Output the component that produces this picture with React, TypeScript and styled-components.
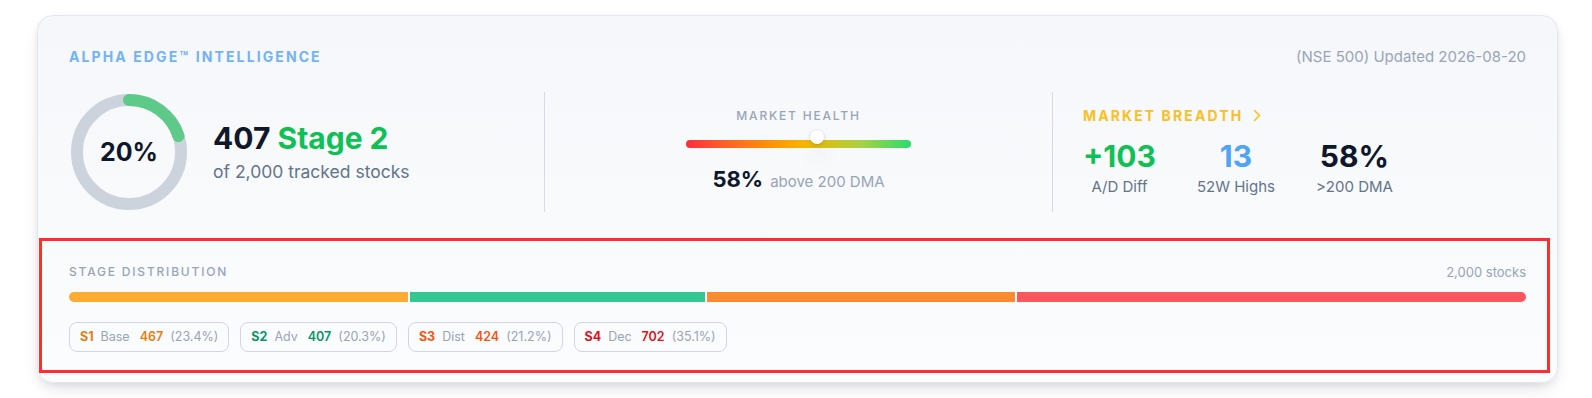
import React from "react";
import styled, { createGlobalStyle } from "styled-components";

const GlobalStyle = createGlobalStyle`
  html, body { margin: 0; padding: 0; background: #ffffff; }
  body {
    font-family: Inter, "Noto Sans", "Liberation Sans", sans-serif;
    -webkit-font-smoothing: antialiased;
    color: #0f172a;
  }
  * { box-sizing: border-box; }
`;

const Page = styled.div`
  padding: 15px 34px 15px 37px;
`;

const Card = styled.section`
  position: relative;
  border: 1px solid #e1e7ef;
  border-radius: 16px;
  background: linear-gradient(180deg, #f5f7fa 0%, #f8fafc 55%, #fbfcfe 100%);
  box-shadow: 0 8px 18px -6px rgba(15, 23, 42, 0.18), 0 2px 6px rgba(15, 23, 42, 0.05);
  padding: 31px 31px 30px;
`;

const Header = styled.div`
  display: flex;
  justify-content: space-between;
  align-items: center;
  height: 20px;
  margin-bottom: 25px;
`;

const Eyebrow = styled.div<{ $color: string }>`
  font-size: 14px;
  line-height: 20px;
  font-weight: 700;
  letter-spacing: 0.15em;
  text-transform: uppercase;
  color: ${(p) => p.$color};
`;

const Updated = styled.div`
  font-size: 15px;
  line-height: 20px;
  color: #9aa5b8;
`;

const Row = styled.div`
  display: flex;
  height: 120px;
`;

const Column = styled.div`
  flex: 1 1 0;
  min-width: 0;
  box-sizing: content-box;
`;

const LeftCol = styled(Column)`
  padding-right: 32px;
  display: flex;
  align-items: center;
  gap: 24px;
`;

const MidCol = styled(Column)`
  padding: 0 32px 4px;
  border-left: 1px solid #d3dbe6;
  border-right: 1px solid #d3dbe6;
  display: flex;
  flex-direction: column;
  align-items: center;
  justify-content: center;
`;

const RightCol = styled(Column)`
  padding-left: 30px;
  padding-bottom: 2px;
  display: flex;
  flex-direction: column;
  justify-content: center;
`;

const Donut = styled.div`
  display: grid;
  place-items: center;
  width: 120px;
  height: 120px;
  flex-shrink: 0;

  & > * {
    grid-area: 1 / 1;
  }
`;

const DonutValue = styled.span`
  font-size: 25px;
  font-weight: 700;
  color: #0f172a;
`;

const StageText = styled.div`
  display: flex;
  flex-direction: column;
`;

const StageCount = styled.div`
  font-size: 30px;
  line-height: 36px;
  font-weight: 700;
  color: #0f172a;
`;

const Green = styled.span`
  color: #0fc155;
`;

const StageSub = styled.div`
  margin-top: 4px;
  font-size: 17.5px;
  line-height: 24px;
  color: #64748b;
`;

const SmallLabel = styled.div`
  font-size: 12px;
  line-height: 16px;
  font-weight: 500;
  letter-spacing: 0.15em;
  text-transform: uppercase;
  color: #98a4b7;
`;

const Track = styled.div`
  position: relative;
  width: 225px;
  height: 8px;
  margin-top: 16px;
  border-radius: 4px;
  background: linear-gradient(
    90deg,
    #ff2d3d 0%,
    #ff5a2a 15%,
    #ff8c0a 35%,
    #f7b500 52%,
    #d9c21a 62%,
    #a8d144 78%,
    #28dc6e 100%
  );
`;

const Thumb = styled.div`
  position: absolute;
  top: -10px;
  width: 14px;
  height: 14px;
  border-radius: 50%;
  background: #ffffff;
  transform: translateX(-50%);
  box-shadow: 0 0 0 1px rgba(15, 23, 42, 0.04), 0 2px 4px rgba(15, 23, 42, 0.12),
    0 14px 22px rgba(15, 23, 42, 0.08);
`;

const HealthValue = styled.div`
  display: flex;
  align-items: baseline;
  gap: 7px;
  margin-top: 17px;
`;

const HealthPct = styled.span`
  font-size: 22px;
  line-height: 28px;
  font-weight: 700;
  color: #0f172a;
`;

const HealthNote = styled.span`
  font-size: 15px;
  color: #98a4b7;
`;

const BreadthHead = styled.div`
  display: flex;
  align-items: center;
  gap: 10px;
`;

const Stats = styled.div`
  display: flex;
  gap: 41px;
  margin-top: 12px;
`;

const Stat = styled.div`
  display: flex;
  flex-direction: column;
  align-items: center;
`;

const StatValue = styled.div<{ $color: string }>`
  font-size: 30px;
  line-height: 36px;
  font-weight: 700;
  color: ${(p) => p.$color};
`;

const StatLabel = styled.div`
  margin-top: 3px;
  font-size: 15px;
  line-height: 20px;
  color: #64748b;
`;

const Distribution = styled.div`
  margin-top: 52px;
`;

const DistHead = styled.div`
  display: flex;
  justify-content: space-between;
  align-items: center;
  line-height: 16px;
`;

const DistTotal = styled.span`
  font-size: 13px;
  color: #98a4b7;
`;

const Bar = styled.div`
  display: flex;
  gap: 2px;
  height: 10px;
  margin-top: 12px;
  border-radius: 5px;
  overflow: hidden;
  background: #ffffff;
`;

const Segment = styled.div<{ $color: string }>`
  background: ${(p) => p.$color};
  min-width: 0;
`;

const Chips = styled.div`
  display: flex;
  gap: 11px;
  margin-top: 20px;
`;

const Chip = styled.div`
  display: inline-flex;
  align-items: center;
  gap: 7px;
  height: 30px;
  padding: 0 10px;
  border: 1px solid #cfd7e2;
  border-radius: 8px;
  font-size: 12.5px;
  line-height: 16px;
`;

const ChipTag = styled.span<{ $color: string }>`
  font-weight: 700;
  color: ${(p) => p.$color};
`;

const ChipName = styled.span`
  color: #98a4b7;
  margin-right: 3px;
`;

const ChipCount = styled.span<{ $color: string }>`
  font-weight: 600;
  color: ${(p) => p.$color};
`;

const ChipPct = styled.span`
  color: #98a4b7;
`;

const Highlight = styled.div`
  position: absolute;
  left: 1px;
  right: 7px;
  top: 222px;
  bottom: 9px;
  border: 3px solid #ff2e2e;
  pointer-events: none;
`;

const stages = [
  { tag: "S1", name: "Base", count: 467, pct: "23.4%", text: "#ea7b10", bar: "#fdab33" },
  { tag: "S2", name: "Adv", count: 407, pct: "20.3%", text: "#059669", bar: "#34c792" },
  { tag: "S3", name: "Dist", count: 424, pct: "21.2%", text: "#f2540f", bar: "#fd8a33" },
  { tag: "S4", name: "Dec", count: 702, pct: "35.1%", text: "#e0101f", bar: "#fb5660" },
];

const breadth = [
  { value: "+103", label: "A/D Diff", color: "#0fc155" },
  { value: "13", label: "52W Highs", color: "#4fa4f8" },
  { value: "58%", label: ">200 DMA", color: "#0f172a" },
];

const R = 52;
const C = 2 * Math.PI * R;

export default function App() {
  const stagePct = 0.2;
  const health = 58;

  return (
    <>
      <GlobalStyle />
      <Page>
        <Card>
          <Header>
            <Eyebrow $color="#72b3f7">Alpha Edge™ Intelligence</Eyebrow>
            <Updated>(NSE 500) Updated 2026-08-20</Updated>
          </Header>

          <Row>
            <LeftCol>
              <Donut>
                <svg width="120" height="120" viewBox="0 0 120 120">
                  <circle cx="60" cy="60" r={R} fill="none" stroke="#cdd3dc" strokeWidth="12" />
                  <circle
                    cx="60"
                    cy="60"
                    r={R}
                    fill="none"
                    stroke="#5dca89"
                    strokeWidth="12"
                    strokeLinecap="round"
                    strokeDasharray={`${C * stagePct} ${C}`}
                    transform="rotate(-90 60 60)"
                  />
                </svg>
                <DonutValue>20%</DonutValue>
              </Donut>
              <StageText>
                <StageCount>
                  407 <Green>Stage 2</Green>
                </StageCount>
                <StageSub>of 2,000 tracked stocks</StageSub>
              </StageText>
            </LeftCol>

            <MidCol>
              <SmallLabel>Market Health</SmallLabel>
              <Track>
                <Thumb style={{ left: `${health}%` }} />
              </Track>
              <HealthValue>
                <HealthPct>58%</HealthPct>
                <HealthNote>above 200 DMA</HealthNote>
              </HealthValue>
            </MidCol>

            <RightCol>
              <BreadthHead>
                <Eyebrow $color="#fbbf24">Market Breadth</Eyebrow>
                <svg width="8" height="13" viewBox="0 0 8 13" fill="none">
                  <path d="M1.5 1.5 L6.5 6.5 L1.5 11.5" stroke="#fbbf24" strokeWidth="1.6" strokeLinecap="round" strokeLinejoin="round" />
                </svg>
              </BreadthHead>
              <Stats>
                {breadth.map((b) => (
                  <Stat key={b.label}>
                    <StatValue $color={b.color}>{b.value}</StatValue>
                    <StatLabel>{b.label}</StatLabel>
                  </Stat>
                ))}
              </Stats>
            </RightCol>
          </Row>

          <Distribution>
            <DistHead>
              <SmallLabel>Stage Distribution</SmallLabel>
              <DistTotal>2,000 stocks</DistTotal>
            </DistHead>
            <Bar>
              {stages.map((s) => (
                <Segment key={s.tag} $color={s.bar} style={{ flexGrow: s.count }} />
              ))}
            </Bar>
            <Chips>
              {stages.map((s) => (
                <Chip key={s.tag}>
                  <ChipTag $color={s.text}>{s.tag}</ChipTag>
                  <ChipName>{s.name}</ChipName>
                  <ChipCount $color={s.text}>{s.count}</ChipCount>
                  <ChipPct>({s.pct})</ChipPct>
                </Chip>
              ))}
            </Chips>
          </Distribution>

          <Highlight />
        </Card>
      </Page>
    </>
  );
}
